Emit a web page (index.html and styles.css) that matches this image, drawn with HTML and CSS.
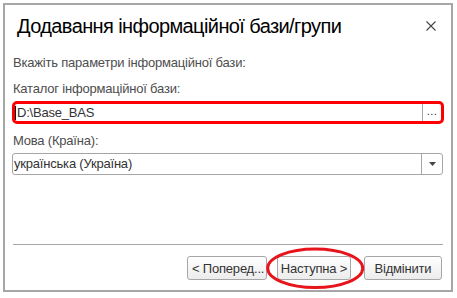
FILE: index.html
```html
<!DOCTYPE html>
<html>
<head>
<meta charset="utf-8">
<link rel="stylesheet" href="styles.css">
</head>
<body>
<div class="win">
  <div class="title-row">
    <div class="title">Додавання інформаційної бази/групи</div>
    <svg class="close" width="10" height="10" viewBox="0 0 10 10"><path d="M0.5 0.5 L9.5 9.5 M9.5 0.5 L0.5 9.5" stroke="#444" stroke-width="1.1" fill="none"/></svg>
  </div>
  <div class="content">
    <div class="label l1">Вкажіть параметри інформаційної бази:</div>
    <div class="label l2">Каталог інформаційної бази:</div>
    <div class="field path">
      <span class="val"><span class="caret"></span>D:\Base_BAS</span>
      <span class="side dots">...</span>
    </div>
    <div class="label l3">Мова (Країна):</div>
    <div class="field sel">
      <span class="val">українська (Україна)</span>
      <span class="side drop"><svg width="7" height="4" viewBox="0 0 7 4"><path d="M0 0 H7 L3.5 4 Z" fill="#444"/></svg></span>
    </div>
  </div>
  <div class="footer">
    <button class="b prev">&lt; Поперед...</button>
    <button class="b next">Наступна &gt;</button>
    <button class="b cancel">Відмінити</button>
  </div>
</div>
<svg class="mark" width="457" height="298" viewBox="0 0 457 298"><ellipse cx="315.2" cy="268.3" rx="47.5" ry="19.2" fill="none" stroke="#e8141c" stroke-width="3"/></svg>
</body>
</html>
```
FILE: styles.css
```css
html, body {
  margin: 0;
  padding: 0;
  background: #ffffff;
}
body {
  width: 457px;
  height: 298px;
  overflow: hidden;
  font-family: "Liberation Sans", Arial, sans-serif;
  font-size: 13px;
  letter-spacing: -0.2px;
}
.win {
  margin: 3px 0 0 3px;
  width: 446px;
  height: 285px;
  border: 2px solid #a6a6a6;
  background: #fff;
  display: flex;
  flex-direction: column;
}
.title-row {
  display: flex;
  align-items: flex-start;
  padding-top: 9px;
}
.title {
  flex: 1;
  padding-left: 12px;
  font-size: 20px;
  line-height: 24px;
  letter-spacing: -0.6px;
  color: #000;
}
.close {
  margin-top: 7px;
  margin-right: 15px;
}
.content {
  display: flex;
  flex-direction: column;
  padding: 0 8px 0 7px;
}
.label {
  line-height: 16px;
  color: #4d4d4d;
  padding-left: 1px;
}
.l1 { margin-top: 17px; }
.l2 { margin-top: 10px; }
.l3 { margin-top: 9px; }
.field {
  display: flex;
  margin-top: 4px;
  box-sizing: border-box;
  color: #333;
}
.val {
  flex: 1;
  display: flex;
  align-items: center;
  white-space: nowrap;
}
.path {
  height: 23px;
  border: 3px solid #ff0000;
  border-radius: 5px;
  margin-right: -1px;
}
.path .val {
  line-height: 17px;
  padding-left: 0;
}
.caret {
  display: inline-block;
  width: 1px;
  height: 14px;
  background: #000;
  margin-right: 1px;
}
.side {
  display: flex;
  align-items: center;
  justify-content: center;
  border-left: 1px solid #a6a6a6;
}
.dots {
  width: 18px;
  font-size: 11px;
  color: #333;
  letter-spacing: 0.5px;
  align-items: flex-start;
  line-height: 15px;
}
.sel {
  height: 22px;
  border: 1px solid #a6a6a6;
  border-radius: 3px;
}
.sel .val {
  line-height: 20px;
  padding-left: 1px;
}
.drop {
  width: 20px;
}
.footer {
  margin: auto 8px 0 8px;
  border-top: 1px solid #a6a6a6;
  padding: 11px 1px 10px 0;
  display: flex;
  justify-content: flex-end;
}
.b {
  height: 24px;
  box-sizing: border-box;
  border: 1px solid #a6a6a6;
  border-radius: 3px;
  background: linear-gradient(#ffffff, #ececec);
  font-family: "Liberation Sans", Arial, sans-serif;
  font-size: 13px;
  letter-spacing: -0.2px;
  color: #333;
  padding: 0;
  white-space: nowrap;
  overflow: hidden;
}
.prev {
  width: 80px;
  text-align: left;
  padding-left: 4px;
}
.next {
  width: 74px;
  margin-left: 10px;
}
.cancel {
  width: 78px;
  margin-left: 13px;
}
.mark {
  position: absolute;
  left: 0;
  top: 0;
  pointer-events: none;
}
```
